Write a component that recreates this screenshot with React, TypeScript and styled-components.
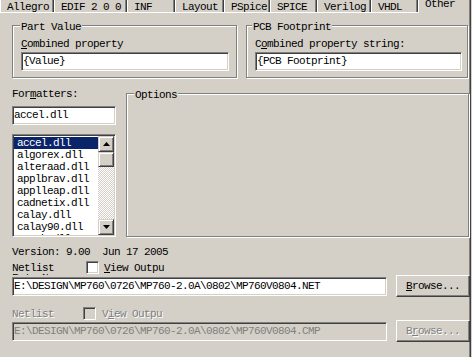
import React from "react";
import styled, { createGlobalStyle } from "styled-components";

const GlobalStyle = createGlobalStyle`
  html, body {
    margin: 0;
    padding: 0;
    background: #d4d0c8;
  }
  body {
    font-family: "Liberation Mono", "DejaVu Sans Mono", monospace;
    font-size: 11px;
    letter-spacing: -0.6px;
    line-height: 12px;
    color: #000;
  }
`;

const tabs: [string, number, boolean?][] = [
  ["Allegro", 54],
  ["EDIF 2 0 0", 73],
  ["INF", 48],
  ["Layout", 49],
  ["PSpice", 46],
  ["SPICE", 47],
  ["Verilog", 54],
  ["VHDL", 47],
  ["Other", 53, true],
];

const formatters = [
  "accel.dll",
  "algorex.dll",
  "alteraad.dll",
  "applbrav.dll",
  "applleap.dll",
  "cadnetix.dll",
  "calay.dll",
  "calay90.dll",
  "ccsch.dll",
];

const NET_PATH = "E:\\DESIGN\\MP760\\0726\\MP760-2.0A\\0802\\MP760V0804";

export default function App() {
  return (
    <Window>
      <GlobalStyle />
      <TabStrip>
        {tabs.map(([label, w, active]) => (
          <Tab key={label} $w={w} $active={active}>
            <TabLabel $raised={active}>{label}</TabLabel>
          </Tab>
        ))}
      </TabStrip>

      <Page>
        <GroupRow>
          <GroupBox $w={225} $h={53}>
            <GroupTitle>Part Value</GroupTitle>
            <Label $top={5}>
              <Key>C</Key>ombined property
            </Label>
            <Field $w={208} $top={2}>{"{Value}"}</Field>
          </GroupBox>
          <GroupBox $w={222} $h={53}>
            <GroupTitle $shift={2}>PCB Footprint</GroupTitle>
            <Label $top={5}>
              C<Key>o</Key>mbined property string:
            </Label>
            <Field $w={207} $top={2}>{"{PCB Footprint}"}</Field>
          </GroupBox>
        </GroupRow>

        <MidRow>
          <LeftCol>
            <Label>
              For<Key>m</Key>atters:
            </Label>
            <Field $w={104} $top={6}>accel.dll</Field>
            <ListBox>
              <ListItems>
                {formatters.map((f, i) => (
                  <ListItem key={f} $selected={i === 0}>
                    {f}
                  </ListItem>
                ))}
              </ListItems>
              <ScrollBar>
                <ScrollButton>
                  <Arrow dir="up" />
                </ScrollButton>
                <Thumb />
                <Track />
                <ScrollButton>
                  <Arrow dir="down" />
                </ScrollButton>
              </ScrollBar>
            </ListBox>
          </LeftCol>
          <GroupBox $w={343} $h={144} $top={15}>
            <GroupTitle>Options</GroupTitle>
          </GroupBox>
        </MidRow>

        <Label $top={9}>Version: 9.00  Jun 17 2005</Label>

        <NetRow $top={3}>
          <NetLabel $w={74}>Netlist</NetLabel>
          <CheckBox />
          <CheckText $gap={5}>
            <Key>V</Key>iew Outpu
          </CheckText>
        </NetRow>
        <ClippedLabel>
          <span>File Name:</span>
        </ClippedLabel>
        <InputRow>
          <Field $w={375}>{NET_PATH + ".NET"}</Field>
          <Button>
            <Key>B</Key>rowse...
          </Button>
        </InputRow>

        <NetRow $top={10} $disabled>
          <NetLabel $w={71}>Netlist</NetLabel>
          <CheckBox $disabled />
          <CheckText $gap={6}>
            V<Key>i</Key>ew Outpu
          </CheckText>
        </NetRow>
        <InputRow>
          <Field $w={375} $disabled>
            {NET_PATH + ".CMP"}
          </Field>
          <Button disabled>
            B<Key>r</Key>owse...
          </Button>
        </InputRow>
      </Page>
    </Window>
  );
}

const Arrow: React.FC<{ dir: "up" | "down" }> = ({ dir }) => (
  <svg width="7" height="4" viewBox="0 0 7 4">
    {dir === "up" ? (
      <path d="M3.5 0 L7 4 L0 4 Z" fill="#000" />
    ) : (
      <path d="M0 0 L7 0 L3.5 4 Z" fill="#000" />
    )}
  </svg>
);

const Window = styled.div`
  width: 472px;
  height: 357px;
  overflow: hidden;
  background: #d4d0c8;
  display: flex;
  flex-direction: column;
`;

const TabStrip = styled.div`
  display: flex;
  align-items: flex-start;
  height: 12px;
  position: relative;
  z-index: 1;
`;

const Tab = styled.div<{ $w: number; $active?: boolean }>`
  flex: none;
  box-sizing: border-box;
  width: ${(p) => p.$w}px;
  height: ${(p) => (p.$active ? 13 : 12)}px;
  padding-left: 6px;
  border-left: 1px solid #fff;
  border-right: 1px solid #404040;
  box-shadow: inset -1px 0 #808080;
  background: #d4d0c8;
  white-space: nowrap;
  overflow: hidden;
`;

const TabLabel = styled.span<{ $raised?: boolean }>`
  display: block;
  margin-top: ${(p) => (p.$raised ? -2 : 1)}px;
`;

const Page = styled.div`
  flex: 1;
  box-sizing: border-box;
  width: 471px;
  padding-left: 12px;
  border-top: 1px solid #fff;
  border-right: 1px solid #404040;
  box-shadow: inset -1px 0 #808080;
  display: flex;
  flex-direction: column;
`;

const GroupRow = styled.div`
  display: grid;
  grid-template-columns: 225px 222px;
  column-gap: 9px;
  margin-top: 12px;
`;

const GroupBox = styled.div<{ $w: number; $h: number; $top?: number }>`
  box-sizing: border-box;
  width: ${(p) => p.$w}px;
  height: ${(p) => p.$h}px;
  margin-top: ${(p) => p.$top ?? 0}px;
  padding-left: 8px;
  border: 1px solid #808080;
  box-shadow: inset 1px 1px 0 #fff, 1px 1px 0 #fff;
  display: flex;
  flex-direction: column;
`;

const GroupTitle = styled.span<{ $shift?: number }>`
  align-self: flex-start;
  height: 12px;
  margin: -5px 0 0 ${(p) => -1 - (p.$shift ?? 0)}px;
  padding: 0 1px;
  background: #d4d0c8;
  white-space: nowrap;
`;

const Label = styled.div<{ $top?: number }>`
  height: 12px;
  margin-top: ${(p) => p.$top ?? 0}px;
  white-space: pre;
`;

const Key = styled.u`
  text-decoration: underline;
  text-underline-offset: 1px;
`;

const Field = styled.div<{ $w: number; $top?: number; $disabled?: boolean }>`
  flex: none;
  box-sizing: border-box;
  width: ${(p) => p.$w}px;
  height: 19px;
  margin-top: ${(p) => p.$top ?? 0}px;
  padding-left: 1px;
  line-height: 17px;
  border: 1px solid;
  border-color: #808080 #fff #fff #808080;
  box-shadow: inset 1px 1px #404040, inset -1px -1px #d4d0c8;
  background: ${(p) => (p.$disabled ? "#d4d0c8" : "#fff")};
  color: ${(p) => (p.$disabled ? "#808080" : "#000")};
  white-space: nowrap;
  overflow: hidden;
`;

const MidRow = styled.div`
  display: flex;
  align-items: flex-start;
  gap: 10px;
`;

const LeftCol = styled.div`
  width: 104px;
  padding-top: 10px;
  display: flex;
  flex-direction: column;
`;

const ListBox = styled.div`
  box-sizing: border-box;
  width: 104px;
  height: 103px;
  margin-top: 9px;
  border: 1px solid;
  border-color: #808080 #fff #fff #808080;
  box-shadow: inset 1px 1px #404040, inset -1px -1px #d4d0c8;
  background: #fff;
  padding: 1px;
  display: flex;
  overflow: hidden;
`;

const ListItems = styled.div`
  flex: 1;
  padding-top: 1px;
  overflow: hidden;
`;

const ListItem = styled.div<{ $selected?: boolean }>`
  height: 12px;
  padding-left: 3px;
  white-space: nowrap;
  background: ${(p) => (p.$selected ? "#0a246a" : "transparent")};
  color: ${(p) => (p.$selected ? "#fff" : "#000")};
`;

const ScrollBar = styled.div`
  width: 16px;
  display: flex;
  flex-direction: column;
`;

const raised = `
  box-sizing: border-box;
  border: 1px solid;
  border-color: #d4d0c8 #404040 #404040 #d4d0c8;
  box-shadow: inset 1px 1px #fff, inset -1px -1px #808080;
  background: #d4d0c8;
`;

const ScrollButton = styled.div`
  ${raised}
  height: 16px;
  display: flex;
  align-items: center;
  justify-content: center;
`;

const Thumb = styled.div`
  ${raised}
  height: 15px;
`;

const Track = styled.div`
  flex: 1;
  background-image: repeating-conic-gradient(#fff 0 25%, #d4d0c8 0 50%);
  background-size: 2px 2px;
`;

const NetRow = styled.div<{ $top: number; $disabled?: boolean }>`
  display: flex;
  align-items: center;
  height: 13px;
  margin-top: ${(p) => p.$top}px;
  color: ${(p) => (p.$disabled ? "#808080" : "#000")};
  text-shadow: ${(p) => (p.$disabled ? "1px 1px 0 #fff" : "none")};
`;

const NetLabel = styled.span<{ $w: number }>`
  width: ${(p) => p.$w}px;
  white-space: nowrap;
`;

const CheckBox = styled.span<{ $disabled?: boolean }>`
  flex: none;
  box-sizing: border-box;
  width: 13px;
  height: 13px;
  border: 1px solid;
  border-color: #808080 #fff #fff #808080;
  box-shadow: inset 1px 1px #404040, inset -1px -1px #d4d0c8;
  background: ${(p) => (p.$disabled ? "#d4d0c8" : "#fff")};
`;

const CheckText = styled.span<{ $gap: number }>`
  margin-left: ${(p) => p.$gap}px;
  white-space: nowrap;
`;

const ClippedLabel = styled.div`
  height: 1px;
  overflow: hidden;
  span {
    display: block;
    margin-top: -2px;
  }
`;

const InputRow = styled.div`
  display: flex;
  align-items: center;
  gap: 9px;
  height: 22px;
`;

const Button = styled.button`
  ${raised}
  flex: none;
  width: 74px;
  height: 22px;
  padding: 0;
  border-color: #fff #404040 #404040 #fff;
  box-shadow: inset -1px -1px #808080;
  font: inherit;
  letter-spacing: inherit;
  line-height: 12px;
  color: #000;
  text-align: center;

  &:disabled {
    color: #808080;
    text-shadow: 1px 1px 0 #fff;
  }
`;
